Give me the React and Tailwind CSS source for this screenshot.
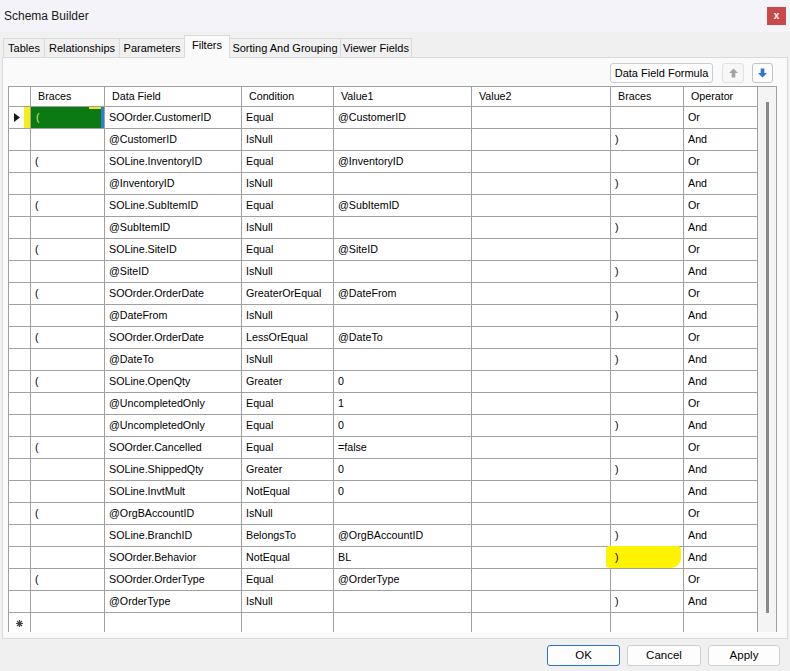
import React from 'react';

const rows = [
  ['(', 'SOOrder.CustomerID', 'Equal', '@CustomerID', '', '', 'Or'],
  ['', '@CustomerID', 'IsNull', '', '', ')', 'And'],
  ['(', 'SOLine.InventoryID', 'Equal', '@InventoryID', '', '', 'Or'],
  ['', '@InventoryID', 'IsNull', '', '', ')', 'And'],
  ['(', 'SOLine.SubItemID', 'Equal', '@SubItemID', '', '', 'Or'],
  ['', '@SubItemID', 'IsNull', '', '', ')', 'And'],
  ['(', 'SOLine.SiteID', 'Equal', '@SiteID', '', '', 'Or'],
  ['', '@SiteID', 'IsNull', '', '', ')', 'And'],
  ['(', 'SOOrder.OrderDate', 'GreaterOrEqual', '@DateFrom', '', '', 'Or'],
  ['', '@DateFrom', 'IsNull', '', '', ')', 'And'],
  ['(', 'SOOrder.OrderDate', 'LessOrEqual', '@DateTo', '', '', 'Or'],
  ['', '@DateTo', 'IsNull', '', '', ')', 'And'],
  ['(', 'SOLine.OpenQty', 'Greater', '0', '', '', 'And'],
  ['', '@UncompletedOnly', 'Equal', '1', '', '', 'Or'],
  ['', '@UncompletedOnly', 'Equal', '0', '', ')', 'And'],
  ['(', 'SOOrder.Cancelled', 'Equal', '=false', '', '', 'Or'],
  ['', 'SOLine.ShippedQty', 'Greater', '0', '', ')', 'And'],
  ['', 'SOLine.InvtMult', 'NotEqual', '0', '', '', 'And'],
  ['(', '@OrgBAccountID', 'IsNull', '', '', '', 'Or'],
  ['', 'SOLine.BranchID', 'BelongsTo', '@OrgBAccountID', '', ')', 'And'],
  ['', 'SOOrder.Behavior', 'NotEqual', 'BL', '', ')', 'And'],
  ['(', 'SOOrder.OrderType', 'Equal', '@OrderType', '', '', 'Or'],
  ['', '@OrderType', 'IsNull', '', '', ')', 'And'],
];

const headers = ['Braces', 'Data Field', 'Condition', 'Value1', 'Value2', 'Braces', 'Operator'];

const tabs = [
  { label: 'Tables', w: 'w-[42px]' },
  { label: 'Relationships', w: 'w-[76px]' },
  { label: 'Parameters', w: 'w-[66px]' },
  { label: 'Filters', w: 'w-[46px]', active: true },
  { label: 'Sorting And Grouping', w: 'w-[112px]' },
  { label: 'Viewer Fields', w: 'w-[72px]' },
];

const cols = 'grid grid-cols-[22px_74px_137px_92px_138px_139px_73px_74px] shrink-0';
const cell = 'border-r border-b border-[#a0a0a0] bg-white overflow-hidden whitespace-nowrap';

function Arrow({ up, color }) {
  return (
    <svg width="9" height="10" viewBox="0 0 10 10">
      <path
        d={up ? 'M5 0 L10 5 L7 5 L7 10 L3 10 L3 5 L0 5 Z' : 'M5 10 L10 5 L7 5 L7 0 L3 0 L3 5 L0 5 Z'}
        fill={color}
      />
    </svg>
  );
}

function Btn({ children, primary, w }) {
  return (
    <button
      className={`${w} h-[21px] rounded-[3px] bg-[#fdfdfd] text-[11.5px] text-black flex items-center justify-center ${
        primary ? 'border border-[#2b73c8]' : 'border border-[#cfcfcf]'
      }`}
    >
      {children}
    </button>
  );
}

export default function App() {
  return (
    <div
      className="w-[790px] h-[671px] bg-[#f0f0f0] flex flex-col overflow-hidden text-black"
      style={{ fontFamily: '"Liberation Sans", Arial, sans-serif' }}
    >
      {/* title bar */}
      <div className="h-[32px] shrink-0 bg-[#f3f3f9] flex items-center justify-between pl-[4px] pr-[4px]">
        <span className="text-[12px] text-[#1a1a1a]">Schema Builder</span>
        <div className="w-[19px] h-[18px] bg-[#c9484a] flex items-center justify-center text-white text-[10px] font-bold leading-none pb-[1px]">
          x
        </div>
      </div>

      {/* tabs */}
      <div className="h-[26px] shrink-0 flex items-end pl-[3px]">
        {tabs.map(t => (
          <div
            key={t.label}
            className={`${t.w} flex items-center justify-center text-[11px] border-t border-l border-r border-[#dadada] -mr-px ${
              t.active ? 'h-[23px] bg-[#fafafa] relative z-10 pb-[4px]' : 'h-[20px] bg-[#f0f0f0]'
            }`}
          >
            {t.label}
          </div>
        ))}
      </div>

      {/* panel */}
      <div className="ml-[2px] w-[786px] h-[582px] shrink-0 border border-[#dadada] bg-[#fafafa] flex flex-col -mt-px">
        <div className="h-[28px] shrink-0 flex items-center justify-end pr-[14px] gap-[8px] pt-[2px]">
          <button className="w-[103px] h-[20px] rounded-[3px] border border-[#cdcdcd] bg-[#fdfdfd] text-[11px] flex items-center justify-center mr-[1px]">
            Data Field Formula
          </button>
          <button className="w-[22px] h-[20px] rounded-[3px] border border-[#e2e2e2] bg-[#f7f7f7] flex items-center justify-center">
            <Arrow up color="#a3a3a3" />
          </button>
          <button className="w-[21px] h-[20px] rounded-[3px] border border-[#c4c4c4] bg-[#fdfdfd] flex items-center justify-center">
            <Arrow color="#2f72d6" />
          </button>
        </div>

        {/* grid */}
        <div className="ml-[5px] w-[769px] h-[546px] shrink-0 border-l border-t border-r border-[#a0a0a0] bg-[#f4f4f4] flex overflow-hidden text-[10.7px]">
          <div className="w-[749px] flex flex-col">
            <div className={`${cols} h-[20px]`}>
              <div className={cell}></div>
              {headers.map((h, i) => (
                <div key={i} className={`${cell} flex items-center pl-[7px]`}>
                  {h}
                </div>
              ))}
            </div>
            {rows.map((r, ri) => (
              <div key={ri} className={`${cols} h-[22px]`}>
                <div className={`${cell} relative flex items-center pl-[5px]`}>
                  {ri === 0 && (
                    <>
                      <svg width="6" height="9" viewBox="0 0 6 9">
                        <path d="M0 0 L6 4.5 L0 9 Z" fill="#1a1a1a" />
                      </svg>
                      <div className="absolute right-0 top-0 w-[6px] h-full bg-[#f5ec1a]"></div>
                    </>
                  )}
                </div>
                {r.map((v, ci) => {
                  if (ri === 0 && ci === 0) {
                    return (
                      <div key={ci} className={`${cell} relative flex items-center pl-[5px] !bg-[#0b7a12] text-[#cfe98a]`}>
                        {v}
                        <div className="absolute right-0 top-0 w-[3px] h-full bg-[#2a7fd4]"></div>
                        <div className="absolute right-[3px] top-0 w-[12px] h-[2px] bg-[#f0e51c]"></div>
                      </div>
                    );
                  }
                  if (ri === 20 && ci === 5) {
                    return (
                      <div key={ci} className={`${cell} relative flex items-center pl-[4px] !overflow-visible`}>
                        <div className="absolute left-[-5px] top-[-1px] w-[75px] h-[22px] bg-[#fff300] rounded-[4px] rounded-br-[10px]"></div>
                        <span className="relative">{v}</span>
                      </div>
                    );
                  }
                  return (
                    <div key={ci} className={`${cell} flex items-center pl-[4px]`}>
                      {v}
                    </div>
                  );
                })}
              </div>
            ))}
            <div className={`${cols} h-[22px]`}>
              <div className={`${cell} flex items-center pl-[7px]`}>
                <svg width="7" height="7" viewBox="0 0 7 7">
                  <path d="M3.5 0 V7 M0 3.5 H7 M1 1 L6 6 M6 1 L1 6" stroke="#444" strokeWidth="1.2" />
                </svg>
              </div>
              {headers.map((h, i) => (
                <div key={i} className={cell}></div>
              ))}
            </div>
          </div>
          <div className="flex-1 flex justify-center pt-[15px]">
            <div className="w-[3px] h-[511px] bg-[#8a8a8a]"></div>
          </div>
        </div>
      </div>

      {/* bottom buttons */}
      <div className="flex justify-end pr-[10px] pt-[6px] gap-[7px]">
        <Btn primary w="w-[73px]">OK</Btn>
        <Btn w="w-[74px]">Cancel</Btn>
        <Btn w="w-[72px]">Apply</Btn>
      </div>
    </div>
  );
}
